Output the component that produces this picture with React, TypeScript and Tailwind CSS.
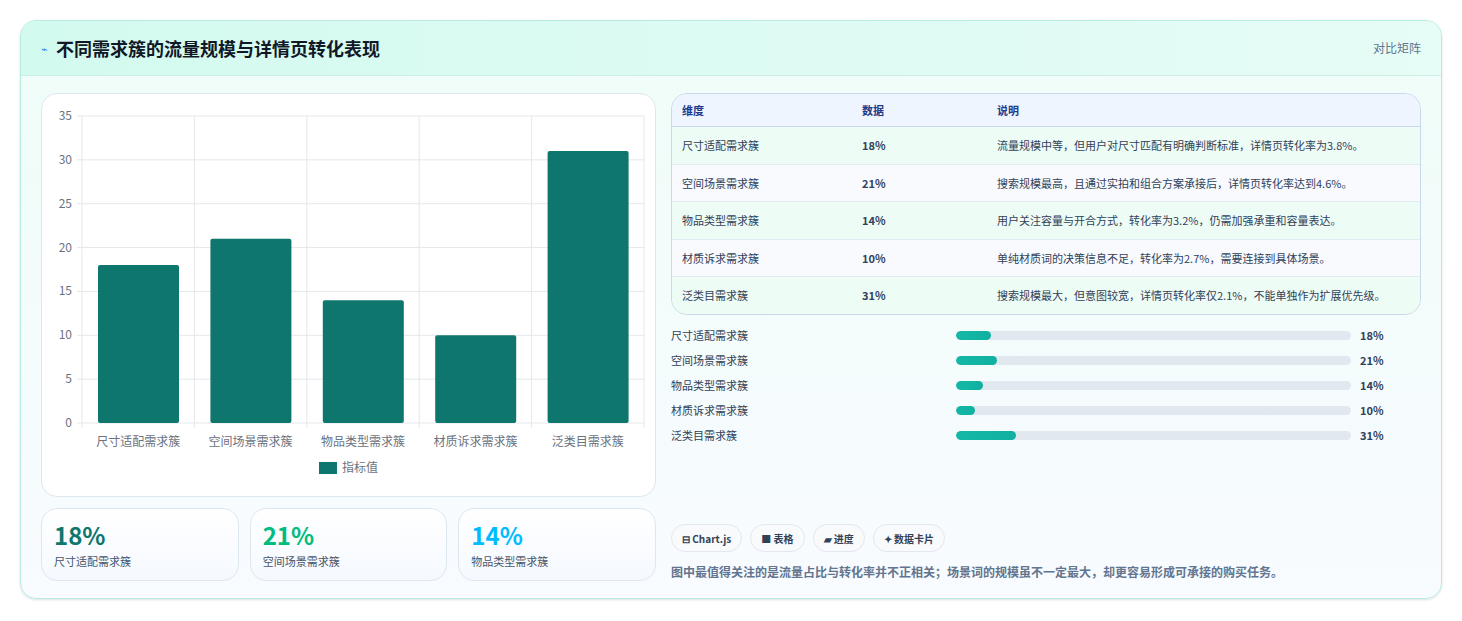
const rows = [
  { name: "尺寸适配需求簇", v: 18, desc: "流量规模中等，但用户对尺寸匹配有明确判断标准，详情页转化率为3.8%。" },
  { name: "空间场景需求簇", v: 21, desc: "搜索规模最高，且通过实拍和组合方案承接后，详情页转化率达到4.6%。" },
  { name: "物品类型需求簇", v: 14, desc: "用户关注容量与开合方式，转化率为3.2%，仍需加强承重和容量表达。" },
  { name: "材质诉求需求簇", v: 10, desc: "单纯材质词的决策信息不足，转化率为2.7%，需要连接到具体场景。" },
  { name: "泛类目需求簇", v: 31, desc: "搜索规模最大，但意图较宽，详情页转化率仅2.1%，不能单独作为扩展优先级。" },
];

const font = { fontFamily: '"Noto Sans CJK SC", "Noto Sans", sans-serif' };

function Chart() {
  const x0 = 40, x1 = 602, yTop = 22, yBot = 329;
  const h = yBot - yTop;
  const cw = (x1 - x0) / 5;
  return (
    <svg width="615" height="402" className="block">
      {[0, 5, 10, 15, 20, 25, 30, 35].map((t) => {
        const y = yBot - (t / 35) * h;
        return (
          <g key={t}>
            <line x1={x0 - 5} x2={x1} y1={y} y2={y} stroke="#e5e7eb" />
            <text x={x0 - 10} y={y + 4} textAnchor="end" fontSize="12" fill="#6b7280">{t}</text>
          </g>
        );
      })}
      {[0, 1, 2, 3, 4, 5].map((i) => (
        <line key={i} x1={x0 + i * cw} x2={x0 + i * cw} y1={yTop} y2={yBot + 5} stroke="#e5e7eb" />
      ))}
      {rows.map((r, i) => {
        const bh = (r.v / 35) * h;
        return (
          <g key={r.name}>
            <rect x={x0 + i * cw + 16} y={yBot - bh} width={81} height={bh} rx="2" fill="#0f766e" />
            <text x={x0 + i * cw + cw / 2} y={352} textAnchor="middle" fontSize="12" fill="#6b7280">{r.name}</text>
          </g>
        );
      })}
      <rect x={277} y={368} width={18} height={12} fill="#0f766e" />
      <text x={300} y={378} fontSize="12" fill="#6b7280">指标值</text>
    </svg>
  );
}

export default function App() {
  return (
    <div className="min-h-screen bg-white p-5" style={font}>
      <div className="rounded-2xl border border-[#b8ece2] bg-gradient-to-b from-[#effdf8] to-[#f8fbff] overflow-hidden shadow-sm">
        <div className="h-[55px] flex items-center justify-between px-5 bg-gradient-to-r from-[#d3faef] to-[#e6fcf6] border-b border-[#cdeee6]">
          <div className="flex items-center gap-2">
            <span className="text-[11px] text-blue-500">⌁</span>
            <span className="text-[18px] font-bold text-[#111827]">不同需求簇的流量规模与详情页转化表现</span>
          </div>
          <span className="text-[12px] text-slate-500">对比矩阵</span>
        </div>
        <div className="flex gap-[15px] px-5 pt-[17px] pb-[17px]">
          <div className="w-[615px] flex flex-col gap-[11px]">
            <div className="h-[404px] rounded-2xl border border-[#dde7ef] bg-white overflow-hidden">
              <Chart />
            </div>
            <div className="grid grid-cols-3 gap-[11px]">
              {[["18%", "text-[#0f766e]"], ["21%", "text-emerald-500"], ["14%", "text-sky-400"]].map(([p, c], i) => (
                <div key={p} className="h-[73px] rounded-2xl border border-[#dde7ef] bg-gradient-to-b from-white to-[#f5f9ff] px-3 pt-3">
                  <div className={`text-[24px] font-bold leading-7 ${c}`}>{p}</div>
                  <div className="text-[11px] text-slate-600 mt-1">{rows[i].name}</div>
                </div>
              ))}
            </div>
          </div>
          <div className="flex-1 flex flex-col">
            <div className="rounded-2xl border border-[#c9d8ea] overflow-hidden text-[11px]">
              <div className="flex h-[33px] items-center bg-[#eef5ff] border-b border-[#c9d8ea] font-bold text-[#1e3a8a] px-[10px]">
                <div className="w-[180px]">维度</div>
                <div className="w-[135px]">数据</div>
                <div>说明</div>
              </div>
              {rows.map((r, i) => (
                <div key={r.name} className={`flex px-[10px] py-[10px] text-slate-700 border-b border-[#e2eaf2] last:border-b-0 ${i % 2 ? "bg-[#f8fafe]" : "bg-[#eefcf6]"}`}>
                  <div className="w-[180px] shrink-0">{r.name}</div>
                  <div className="w-[135px] shrink-0 font-semibold">{r.v}%</div>
                  <div className="flex-1 leading-[16px] pr-6">{r.desc}</div>
                </div>
              ))}
            </div>
            <div className="flex flex-col gap-[7px] mt-[12px]">
              {rows.map((r) => (
                <div key={r.name} className="flex items-center h-[18px] text-[11px] text-slate-700">
                  <div className="w-[285px]">{r.name}</div>
                  <div className="w-[395px] h-[9px] rounded-full bg-[#e2e8f0] overflow-hidden">
                    <div className="h-full rounded-full bg-gradient-to-r from-[#14b8a6] to-[#10b0a0]" style={{ width: `${(r.v / 35) * 35 * 0.87 / 1}%`.replace(/.*/, `${r.v * 0.49}%`) }} />
                  </div>
                  <div className="ml-[9px] font-bold">{r.v}%</div>
                </div>
              ))}
            </div>
            <div className="flex-1" />
            <div className="flex gap-2 text-[10px] font-semibold text-slate-700">
              {["⊟ Chart.js", "■ 表格", "▰ 进度", "✦ 数据卡片"].map((t) => (
                <span key={t} className="h-[28px] px-[10px] flex items-center rounded-full border border-[#e2e8f0] bg-[#f8fafc]">{t}</span>
              ))}
            </div>
            <div className="mt-[11px] text-[12px] font-semibold text-slate-500">图中最值得关注的是流量占比与转化率并不正相关；场景词的规模虽不一定最大，却更容易形成可承接的购买任务。</div>
          </div>
        </div>
      </div>
    </div>
  );
}
